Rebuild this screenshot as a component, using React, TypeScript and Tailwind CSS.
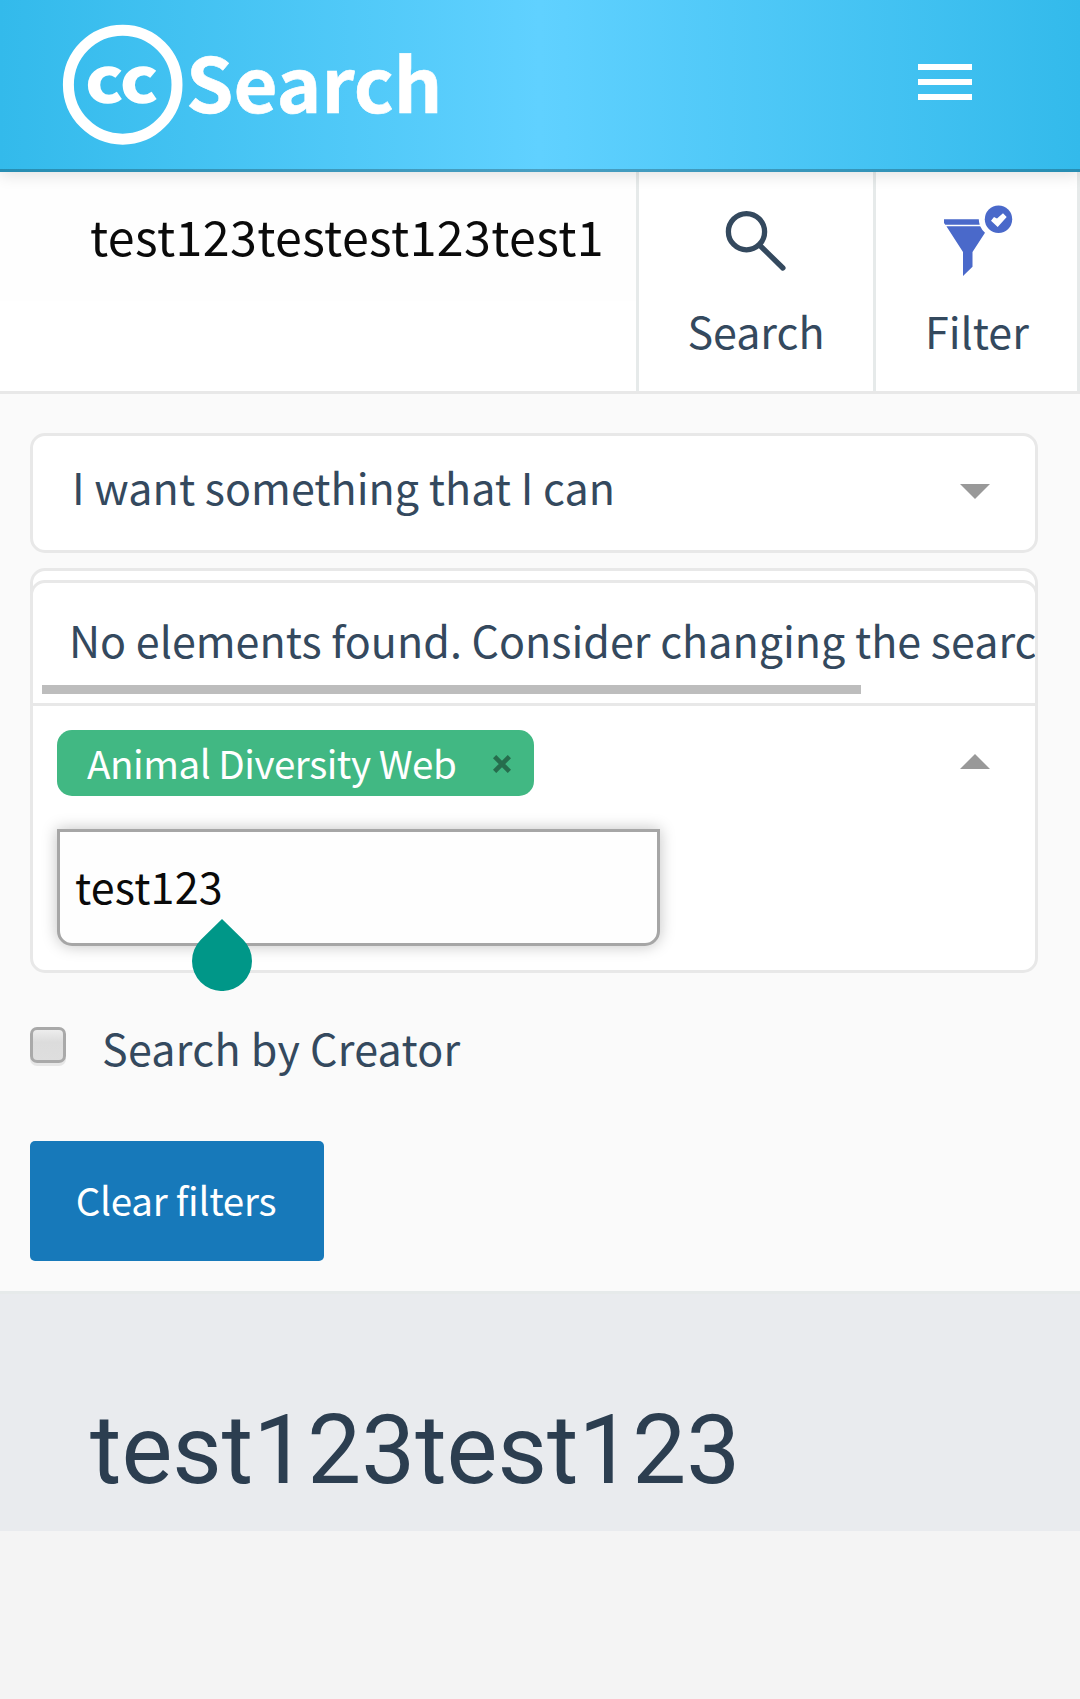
function Logo() {
  return (
    <svg width="400" height="122" viewBox="0 0 400 122" className="ml-[62px] mt-6 block" fill="#fff">
      <ellipse cx="60.7" cy="60.7" rx="54.3" ry="54.5" fill="none" stroke="#fff" strokeWidth="11" />
      <text x="23.8" y="78" fontSize="61.5" fontWeight="700" textLength="71.500" lengthAdjust="spacingAndGlyphs" stroke="#fff" strokeWidth="1.600">cc</text>
      <text x="124" y="89" fontSize="75" fontWeight="700" textLength="256.500" lengthAdjust="spacingAndGlyphs" stroke="#fff" strokeWidth="0.600">Search</text>
    </svg>
  );
}

function FilterIcon() {
  return (
    <svg width="70" height="72" viewBox="0 0 70 72" fill="#4a69ca" className="block">
      <path d="M0 14.300h34.800q.1 3 .9 5.400H1.300L0 18zM2.400 21.200H36.200q1.600 3.500 4.800 6.600L28.500 47v14.700L19 71V47z" />
      <circle cx="54.500" cy="14.300" r="13.700" />
      <path d="M47 15.700L50 12l3 1.500 6-5.200 3.700 3.700-9 10z" fill="#fff" />
    </svg>
  );
}

export default function App() {
  return (
    <div className="min-h-[1699px] w-[1080px] bg-[#f4f4f4] font-['Noto_Sans_CJK_SC',sans-serif] text-[43px] text-[#34495e]">
      <header className="relative z-10 flex h-[172px] justify-between border-b-[3px] border-black/24 bg-[linear-gradient(90deg,#33baeb,#60d1ff_50%,#33baeb)] shadow-[0_3px_15px_rgba(0,0,0,0.12)]">
        <Logo />
        <button aria-label="Menu" className="mr-[108px] mt-16 flex h-9 w-[54px] flex-col justify-between">
          <span className="h-1.5 w-full bg-white" />
          <span className="h-1.5 w-full bg-white" />
          <span className="h-1.5 w-full bg-white" />
        </button>
      </header>

      <div className="flex h-[222px] border-b-[3px] border-[#e8e8e8] bg-white">
        <div className="h-[129px] w-[636px] overflow-hidden whitespace-nowrap bg-[#fefefe] pl-[90px] text-[48.3px] leading-[126px] tracking-[0.39px] text-[#0a0a0a]">
          test123testest123test1
        </div>
        <button className="flex w-[240px] flex-col items-center border-x-[3px] border-[#e6eaea] pt-[36px]">
          <svg width="64" height="64" viewBox="0 0 64 64" fill="none" stroke="#34495e" strokeWidth="5.300" strokeLinecap="round">
            <circle cx="22.500" cy="23.700" r="18.100" />
            <path d="M36 37.500L58.900 60" />
          </svg>
          <span className="mt-[27px] leading-[62px]">Search</span>
        </button>
        <button className="flex w-[204px] flex-col items-start border-r-[3px] border-[#e6eaea] pl-[49px] pt-[33px]">
          <div className="pl-[19px]"><FilterIcon /></div>
          <span className="mt-[22px] leading-[62px]">Filter</span>
        </button>
      </div>

      <main className="h-[897px] bg-[#fafafa] pl-[30px] pt-[39px]">
        <div className="flex h-[120px] w-[1008px] justify-between rounded-[15px] border-[3px] border-[#e8e8e8] bg-white pl-[39px] pr-[45px]">
          <span className="mt-[19px] leading-[62px] tracking-[0.04px]">I want something that I can</span>
          <svg width="30" height="15" className="mt-12" fill="#999"><path d="M0 0h30L15 15z" /></svg>
        </div>

        <div className="relative mt-[15px] h-[405px] w-[1008px] rounded-[15px] border-[3px] border-[#e8e8e8] bg-white pt-[9px]">
          <div className="-mx-[3px] h-[126px] overflow-hidden rounded-t-[15px] border-[3px] border-[#e8e8e8] bg-white">
            <div className="mt-[25px] whitespace-nowrap pl-9 leading-[62px] tracking-[0.02px]">No elements found. Consider changing the search query.</div>
            <div className="ml-[9px] mt-[15px] h-[9px] w-[819px] bg-[#bdbdbd]" />
          </div>
          <div className="flex justify-between pl-6 pr-[45px] pt-6">
            <span className="flex h-[66px] w-[477px] items-center justify-between rounded-[15px] bg-[#41b883] pl-[30px] pr-[23px] text-[38.6px] text-white">
              <span className="-mt-[3px] leading-[62px] tracking-[-0.48px]">Animal Diversity Web</span>
              <svg width="18" height="18" viewBox="0 0 18 18" className="mt-0.5" stroke="#266d4d" strokeWidth="4.600"><path d="M1.600 1.600l14.800 14.800M16.400 1.600L1.600 16.400" /></svg>
            </span>
            <svg width="30" height="15" className="mt-6" fill="#999"><path d="M0 15h30L15 0z" /></svg>
          </div>
          <div className="ml-6 mt-[33px] h-[117px] w-[603px] rounded-b-[15px] border-[3px] border-[#a6a6a6] bg-[#fefefe] pl-[15px] leading-[107px] tracking-[0.2px] text-[#0a0a0a] shadow-[0_0_15px_rgba(10,10,10,0.25)]">
            test123
          </div>
          <svg width="60" height="72" viewBox="0 0 60 72" className="absolute left-[159px] top-[348px]" fill="#009788">
            <path d="M30 0L51.200 20.800A30 30 0 1 1 8.800 20.800z" />
          </svg>
        </div>

        <label className="mt-12 flex">
          <span className="mt-1.5 h-9 w-9 rounded-[7px] border-[3px] border-[#a9a9a9] bg-[linear-gradient(#ededed,#dcdcdc_40%,#dedede)] shadow-[0_3px_0_rgba(0,0,0,0.08)]" />
          <span className="-mt-[5px] ml-9 leading-[62px] tracking-[0.27px]">Search by Creator</span>
        </label>

        <button className="mt-[63px] block h-[120px] w-[294px] rounded-[5px] bg-[#1779ba] pb-1 pr-0.5 text-[38.6px] leading-[116px] tracking-[-0.25px] text-white">
          Clear filters
        </button>
      </main>

      <section className="h-[240px] border-t-[3px] border-[#e6eaea] bg-[#e9ebee] pl-[90px] pt-[100px]">
        <h1 className="font-['Roboto'] text-[96px] leading-[112px] text-[#2c3e50]">test123test123</h1>
      </section>
    </div>
  );
}
